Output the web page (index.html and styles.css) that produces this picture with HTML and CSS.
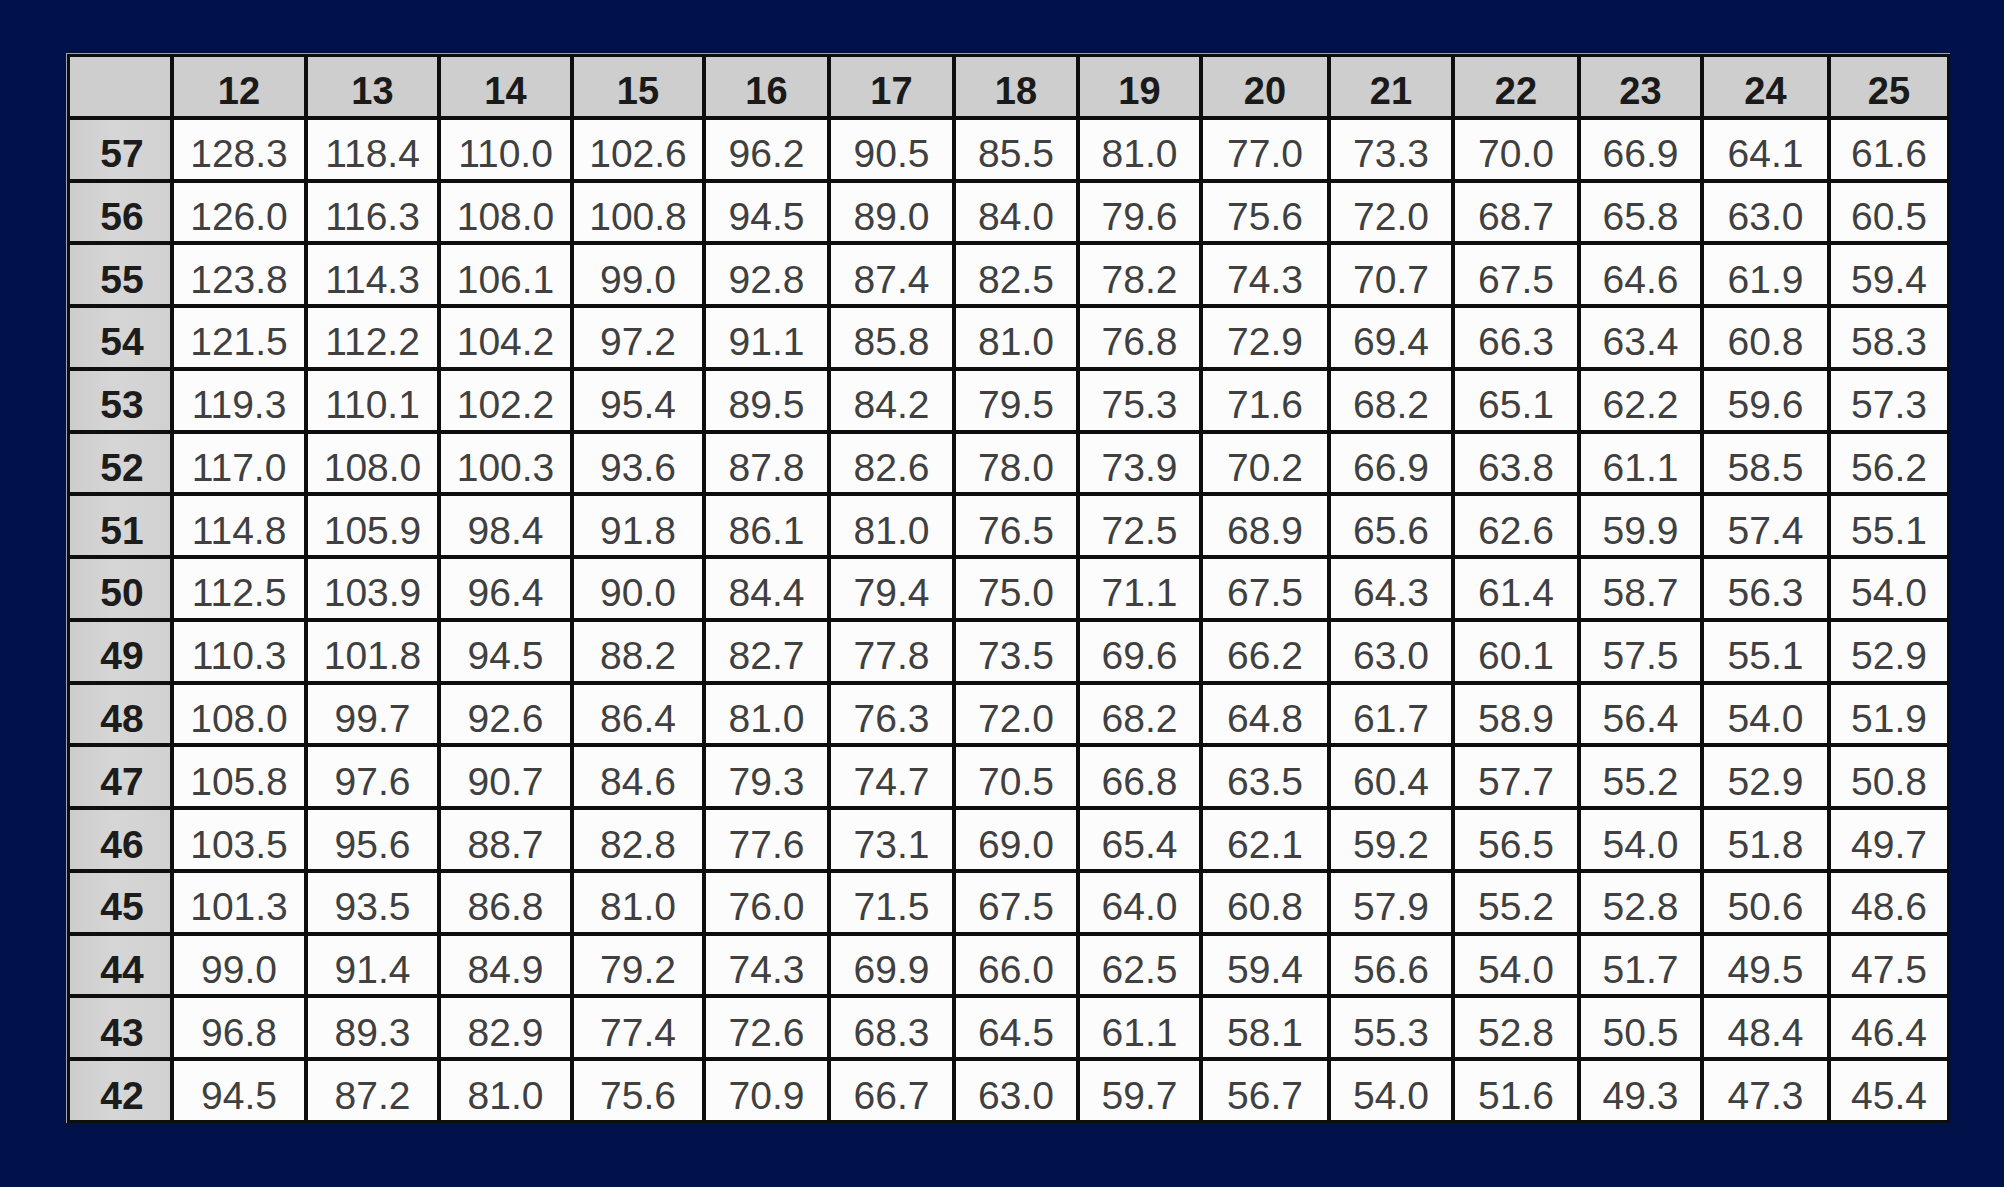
FILE: index.html
```html
<!DOCTYPE html>
<html lang="en">
<head>
<meta charset="utf-8">
<title>Table</title>
<link rel="stylesheet" href="styles.css">
</head>
<body>
<div class="sheet">
  <div class="grid">
    <div class="hd"></div><div class="hd">12</div><div class="hd">13</div><div class="hd">14</div><div class="hd">15</div><div class="hd">16</div><div class="hd">17</div><div class="hd">18</div><div class="hd">19</div><div class="hd">20</div><div class="hd">21</div><div class="hd">22</div><div class="hd">23</div><div class="hd">24</div><div class="hd">25</div>

    <div class="lb">57</div><div class="cl">128.3</div><div class="cl">118.4</div><div class="cl">110.0</div><div class="cl">102.6</div><div class="cl">96.2</div><div class="cl">90.5</div><div class="cl">85.5</div><div class="cl">81.0</div><div class="cl">77.0</div><div class="cl">73.3</div><div class="cl">70.0</div><div class="cl">66.9</div><div class="cl">64.1</div><div class="cl">61.6</div>
    <div class="lb">56</div><div class="cl">126.0</div><div class="cl">116.3</div><div class="cl">108.0</div><div class="cl">100.8</div><div class="cl">94.5</div><div class="cl">89.0</div><div class="cl">84.0</div><div class="cl">79.6</div><div class="cl">75.6</div><div class="cl">72.0</div><div class="cl">68.7</div><div class="cl">65.8</div><div class="cl">63.0</div><div class="cl">60.5</div>
    <div class="lb">55</div><div class="cl">123.8</div><div class="cl">114.3</div><div class="cl">106.1</div><div class="cl">99.0</div><div class="cl">92.8</div><div class="cl">87.4</div><div class="cl">82.5</div><div class="cl">78.2</div><div class="cl">74.3</div><div class="cl">70.7</div><div class="cl">67.5</div><div class="cl">64.6</div><div class="cl">61.9</div><div class="cl">59.4</div>
    <div class="lb">54</div><div class="cl">121.5</div><div class="cl">112.2</div><div class="cl">104.2</div><div class="cl">97.2</div><div class="cl">91.1</div><div class="cl">85.8</div><div class="cl">81.0</div><div class="cl">76.8</div><div class="cl">72.9</div><div class="cl">69.4</div><div class="cl">66.3</div><div class="cl">63.4</div><div class="cl">60.8</div><div class="cl">58.3</div>
    <div class="lb">53</div><div class="cl">119.3</div><div class="cl">110.1</div><div class="cl">102.2</div><div class="cl">95.4</div><div class="cl">89.5</div><div class="cl">84.2</div><div class="cl">79.5</div><div class="cl">75.3</div><div class="cl">71.6</div><div class="cl">68.2</div><div class="cl">65.1</div><div class="cl">62.2</div><div class="cl">59.6</div><div class="cl">57.3</div>
    <div class="lb">52</div><div class="cl">117.0</div><div class="cl">108.0</div><div class="cl">100.3</div><div class="cl">93.6</div><div class="cl">87.8</div><div class="cl">82.6</div><div class="cl">78.0</div><div class="cl">73.9</div><div class="cl">70.2</div><div class="cl">66.9</div><div class="cl">63.8</div><div class="cl">61.1</div><div class="cl">58.5</div><div class="cl">56.2</div>
    <div class="lb">51</div><div class="cl">114.8</div><div class="cl">105.9</div><div class="cl">98.4</div><div class="cl">91.8</div><div class="cl">86.1</div><div class="cl">81.0</div><div class="cl">76.5</div><div class="cl">72.5</div><div class="cl">68.9</div><div class="cl">65.6</div><div class="cl">62.6</div><div class="cl">59.9</div><div class="cl">57.4</div><div class="cl">55.1</div>
    <div class="lb">50</div><div class="cl">112.5</div><div class="cl">103.9</div><div class="cl">96.4</div><div class="cl">90.0</div><div class="cl">84.4</div><div class="cl">79.4</div><div class="cl">75.0</div><div class="cl">71.1</div><div class="cl">67.5</div><div class="cl">64.3</div><div class="cl">61.4</div><div class="cl">58.7</div><div class="cl">56.3</div><div class="cl">54.0</div>
    <div class="lb">49</div><div class="cl">110.3</div><div class="cl">101.8</div><div class="cl">94.5</div><div class="cl">88.2</div><div class="cl">82.7</div><div class="cl">77.8</div><div class="cl">73.5</div><div class="cl">69.6</div><div class="cl">66.2</div><div class="cl">63.0</div><div class="cl">60.1</div><div class="cl">57.5</div><div class="cl">55.1</div><div class="cl">52.9</div>
    <div class="lb">48</div><div class="cl">108.0</div><div class="cl">99.7</div><div class="cl">92.6</div><div class="cl">86.4</div><div class="cl">81.0</div><div class="cl">76.3</div><div class="cl">72.0</div><div class="cl">68.2</div><div class="cl">64.8</div><div class="cl">61.7</div><div class="cl">58.9</div><div class="cl">56.4</div><div class="cl">54.0</div><div class="cl">51.9</div>
    <div class="lb">47</div><div class="cl">105.8</div><div class="cl">97.6</div><div class="cl">90.7</div><div class="cl">84.6</div><div class="cl">79.3</div><div class="cl">74.7</div><div class="cl">70.5</div><div class="cl">66.8</div><div class="cl">63.5</div><div class="cl">60.4</div><div class="cl">57.7</div><div class="cl">55.2</div><div class="cl">52.9</div><div class="cl">50.8</div>
    <div class="lb">46</div><div class="cl">103.5</div><div class="cl">95.6</div><div class="cl">88.7</div><div class="cl">82.8</div><div class="cl">77.6</div><div class="cl">73.1</div><div class="cl">69.0</div><div class="cl">65.4</div><div class="cl">62.1</div><div class="cl">59.2</div><div class="cl">56.5</div><div class="cl">54.0</div><div class="cl">51.8</div><div class="cl">49.7</div>
    <div class="lb">45</div><div class="cl">101.3</div><div class="cl">93.5</div><div class="cl">86.8</div><div class="cl">81.0</div><div class="cl">76.0</div><div class="cl">71.5</div><div class="cl">67.5</div><div class="cl">64.0</div><div class="cl">60.8</div><div class="cl">57.9</div><div class="cl">55.2</div><div class="cl">52.8</div><div class="cl">50.6</div><div class="cl">48.6</div>
    <div class="lb">44</div><div class="cl">99.0</div><div class="cl">91.4</div><div class="cl">84.9</div><div class="cl">79.2</div><div class="cl">74.3</div><div class="cl">69.9</div><div class="cl">66.0</div><div class="cl">62.5</div><div class="cl">59.4</div><div class="cl">56.6</div><div class="cl">54.0</div><div class="cl">51.7</div><div class="cl">49.5</div><div class="cl">47.5</div>
    <div class="lb">43</div><div class="cl">96.8</div><div class="cl">89.3</div><div class="cl">82.9</div><div class="cl">77.4</div><div class="cl">72.6</div><div class="cl">68.3</div><div class="cl">64.5</div><div class="cl">61.1</div><div class="cl">58.1</div><div class="cl">55.3</div><div class="cl">52.8</div><div class="cl">50.5</div><div class="cl">48.4</div><div class="cl">46.4</div>
    <div class="lb">42</div><div class="cl">94.5</div><div class="cl">87.2</div><div class="cl">81.0</div><div class="cl">75.6</div><div class="cl">70.9</div><div class="cl">66.7</div><div class="cl">63.0</div><div class="cl">59.7</div><div class="cl">56.7</div><div class="cl">54.0</div><div class="cl">51.6</div><div class="cl">49.3</div><div class="cl">47.3</div><div class="cl">45.4</div>
  </div>
</div>
</body>
</html>
```

FILE: styles.css
```css
html, body {
  margin: 0;
  padding: 0;
  background: #01114a;
}

body {
  width: 2004px;
  height: 1187px;
  overflow: hidden;
  font-family: "Liberation Sans", Arial, sans-serif;
}

.sheet {
  padding: 53px 0 0 66px;
}

.grid {
  display: grid;
  box-sizing: border-box;
  width: 1884px;
  height: 1070px;
  grid-template-columns: 100px 130px 129px 129px 128px 121px 121px 120px 119px 124px 120px 122px 119px 123px 116px;
  grid-template-rows: repeat(17, 1fr);
  column-gap: 4px;
  row-gap: 4px;
  padding: 3px;
  background: #0e0e0e;
  border-top: 1px solid #9ea3b3;
  border-left: 1px solid #9ea3b3;
}

.hd,
.lb,
.cl {
  display: flex;
  align-items: center;
  justify-content: center;
  padding-top: 9px;
  box-sizing: border-box;
  line-height: 1;
}

.hd {
  background: #cecece;
  color: #1a1a1a;
  font-weight: bold;
  font-size: 38px;
}

.lb {
  background: linear-gradient(90deg, #cdcdcd 0%, #d6d6d6 45%, #d1d1d1 100%);
  color: #1c1c1c;
  font-weight: bold;
  font-size: 39px;
  padding-left: 4px;
}

.cl {
  background: #fcfcfc;
  color: #404040;
  font-size: 39px;
}
```
